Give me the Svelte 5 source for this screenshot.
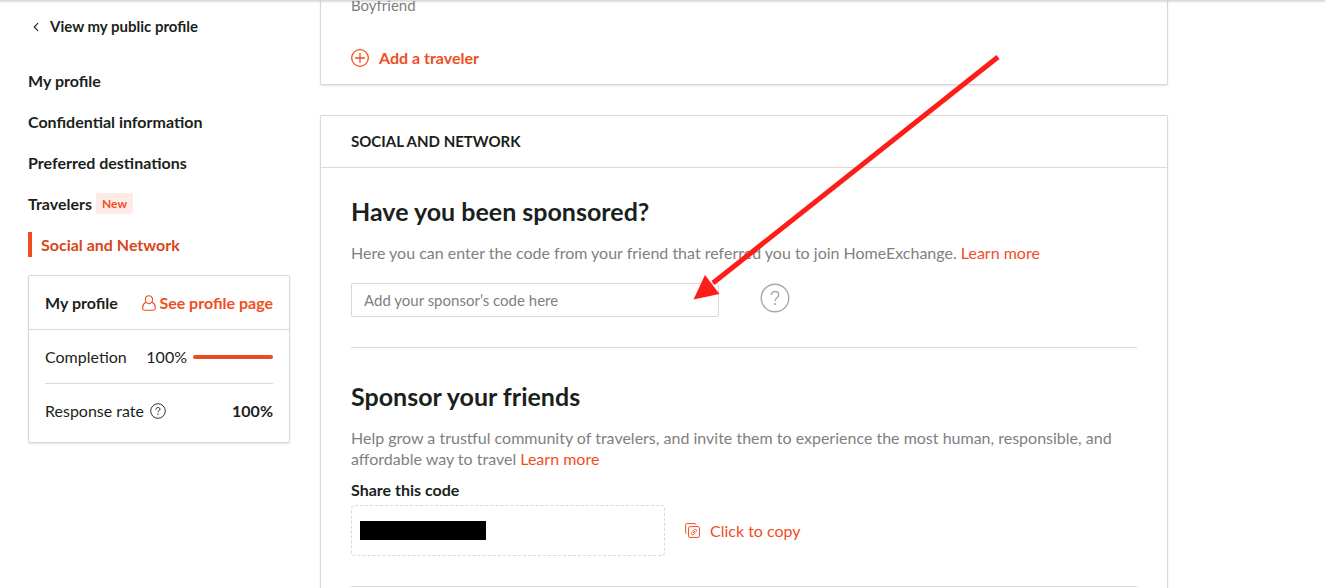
<script lang="ts">
  const links = [
    { label: 'My profile' },
    { label: 'Confidential information' },
    { label: 'Preferred destinations' },
    { label: 'Travelers', badge: 'New' },
    { label: 'Social and Network', active: true },
  ];
  const completion = 100;
  const responseRate = 100;
  let sponsorCode = $state('');
</script>

<div class="page">
  <aside class="sidebar">
    <a class="back" href="#public">
      <svg width="6" height="10" viewBox="0 0 6 10" aria-hidden="true">
        <path d="M5 1.2 1.2 5 5 8.8" fill="none" stroke="currentColor" stroke-width="1.1" />
      </svg>
      View my public profile
    </a>

    <nav>
      {#each links as link}
        <a href="#section" class:active={link.active}>
          <span>{link.label}</span>
          {#if link.badge}<span class="badge">{link.badge}</span>{/if}
        </a>
      {/each}
    </nav>

    <section class="card summary">
      <div class="summary-head">
        <strong>My profile</strong>
        <a class="see" href="#profile">
          <svg width="14" height="16" viewBox="0 0 14 16" fill="none" stroke="currentColor" stroke-width="1.1" aria-hidden="true">
            <path d="M7 .8C4.900.8 3.400 2.500 3.400 4.600S4.900 8.600 7 8.600s3.600-1.900 3.600-4S9.100.8 7 .8Z" />
            <path d="M3.900 7.300C1.900 8.400.7 10 .7 12.400v1.200c0 1 .6 1.600 1.600 1.600h9.400c1 0 1.600-.6 1.600-1.600v-1.200c0-2.400-1.200-4-3.200-5.100" />
          </svg>
          <span>See profile page</span>
        </a>
      </div>
      <div class="summary-body">
        <div class="stat">
          <span>Completion</span>
          <span class="meter">
            {completion}%
            <span class="track"><span class="fill" style="width: {completion}%"></span></span>
          </span>
        </div>
        <div class="stat">
          <span class="rate">
            Response rate
            <svg width="16" height="16" viewBox="0 0 16 16" fill="none" stroke="currentColor" aria-hidden="true">
              <circle cx="8" cy="8" r="7.300" stroke-width=".9" />
              <path d="M6 6.500C6 5.300 6.800 4.500 8 4.500s2 .8 2 1.800C10 7.600 8 7.700 8 9.300" stroke-width="1" />
              <circle cx="8" cy="11.200" r=".7" fill="currentColor" stroke="none" />
            </svg>
          </span>
          <strong>{responseRate}%</strong>
        </div>
      </div>
    </section>
  </aside>

  <main>
    <section class="card travelers">
      <p class="relation">Boyfriend</p>
      <button class="add" type="button">
        <svg width="18" height="18" viewBox="0 0 18 18" fill="none" stroke="currentColor" stroke-width="1.300" aria-hidden="true">
          <circle cx="9" cy="9" r="8.300" />
          <path d="M9 4v10M4 9h10" />
        </svg>
        Add a traveler
      </button>
    </section>

    <section class="card social">
      <h2>SOCIAL AND NETWORK</h2>
      <div class="social-body">
        <div class="block">
          <h3>Have you been sponsored?</h3>
          <p>
            Here you can enter the code from your friend that referred you to join HomeExchange.
            <a href="#sponsored">Learn more</a>
          </p>
          <div class="entry">
            <input type="text" placeholder="Add your sponsor’s code here" aria-label="Add your sponsor’s code here" bind:value={sponsorCode} />
            <button class="help" type="button" aria-label="Help">
              <svg width="30" height="30" viewBox="0 0 30 30" fill="none" stroke="currentColor" aria-hidden="true">
                <circle cx="15" cy="15" r="13.800" stroke-width="1.400" />
                <path d="M11.300 12.300c0-2.300 1.400-3.800 3.700-3.800s3.700 1.500 3.700 3.500c0 2.800-3.700 2.900-3.700 6.200" stroke-width="1.400" />
                <circle cx="15" cy="21" r="1.100" fill="currentColor" stroke="none" />
              </svg>
            </button>
          </div>
        </div>

        <div class="block">
          <h3>Sponsor your friends</h3>
          <p>
            Help grow a trustful community of travelers, and invite them to experience the most human, responsible, and
            affordable way to travel <a href="#sponsor">Learn more</a>
          </p>
          <h4>Share this code</h4>
          <div class="share">
            <div class="code"><span class="redacted"></span></div>
            <button class="copy" type="button">
              <svg width="15" height="15" viewBox="0 0 15 15" fill="none" stroke="currentColor" aria-hidden="true">
                <path d="M2 10.500H1.600c-.6 0-1-.4-1-1V1.600c0-.6.4-1 1-1h8.300c.6 0 1 .4 1 1V2" />
                <rect x="3.600" y="3.600" width="10.800" height="10.800" rx="1.200" />
                <path d="m7.800 8 1.500-1.500c1.300-1 2.900.6 1.900 1.900L9.900 9.700M10.200 10l-1.500 1.500c-1.300 1-2.900-.6-1.900-1.900l1.300-1.300M8 10l2-2" stroke-width=".9" />
              </svg>
              Click to copy
            </button>
          </div>
        </div>
      </div>
    </section>
  </main>

  <svg class="arrow" width="308" height="248" viewBox="0 0 308 248" aria-hidden="true">
    <path d="M305 3 20 229" stroke="#ff1d19" stroke-width="5" />
    <path d="M.5 245.500 12 221 26.500 240Z" fill="#ff1d19" />
  </svg>
</div>

<style>
  :global(body) {
    margin: 0;
    background: #fff;
  }
  .page {
    position: relative;
    display: flex;
    align-items: flex-start;
    gap: 30px;
    box-sizing: border-box;
    max-width: 1196px;
    height: 100vh;
    padding: 0 28px;
    overflow: hidden;
    color: #1b1f20;
    font: 16px/21px Lato, sans-serif;
  }
  .page::before {
    content: '';
    position: fixed;
    inset: 0 0 auto;
    height: 1px;
    background: #d9d9d9;
    box-shadow: 0 1px 2px #0003;
  }
  h2, h3, h4, p {
    margin: 0;
  }
  a {
    color: #f04e1f;
    text-decoration: none;
  }
  button {
    display: flex;
    align-items: center;
    padding: 0;
    border: 0;
    background: none;
    color: #f04e1f;
    font: inherit;
    cursor: pointer;
  }
  svg {
    flex: none;
  }
  .card {
    border: 1px solid #d9d9d9;
    border-radius: 2px;
    box-shadow: 0 1px 2px #0000001f;
    background: #fff;
  }

  .sidebar {
    flex: 0 0 262px;
    padding-top: 16px;
  }
  .back {
    display: flex;
    align-items: center;
    gap: 11px;
    padding-left: 5px;
    color: inherit;
    font-size: 15px;
    font-weight: 700;
  }
  nav {
    display: flex;
    flex-direction: column;
    gap: 16px;
    margin: 31px 0 18px;
  }
  nav a {
    display: flex;
    align-items: center;
    gap: 4px;
    height: 25px;
    color: inherit;
    font-weight: 700;
  }
  nav a.active {
    padding-left: 9px;
    border-left: 4px solid #f04e1f;
    color: #d9451b;
  }
  .badge {
    padding: 0 6px;
    border-radius: 2px;
    background: #fdebe5;
    color: #f04e1f;
    font-size: 12px;
  }

  .summary-head {
    display: flex;
    align-items: center;
    justify-content: space-between;
    height: 53px;
    padding: 0 16px;
    border-bottom: 1px solid #d9d9d9;
  }
  .see {
    display: flex;
    align-items: center;
    gap: 3px;
    font-weight: 700;
  }
  .summary-body {
    padding: 0 16px 5px;
  }
  .stat {
    display: flex;
    align-items: center;
    justify-content: space-between;
    height: 53px;
  }
  .stat + .stat {
    border-top: 1px solid #d9d9d9;
  }
  .meter,
  .rate {
    display: flex;
    align-items: center;
    gap: 6px;
  }
  .track {
    width: 80px;
    height: 4px;
    border-radius: 2px;
    background: #eee;
  }
  .fill {
    display: block;
    height: 4px;
    border-radius: 2px;
    background: #ea4b20;
  }

  main {
    flex: 1;
    min-width: 0;
  }
  .travelers {
    padding: 0 30px 16px;
    border-top: 0;
  }
  .relation {
    color: #7f7f7f;
    font-size: 15px;
    line-height: 11px;
  }
  .add {
    gap: 10px;
    margin-top: 36px;
    font-weight: 700;
  }
  .social {
    margin-top: 30px;
  }
  h2 {
    padding: 15px 30px;
    border-bottom: 1px solid #d9d9d9;
    font-size: 15px;
    line-height: 21px;
  }
  .social-body {
    padding: 0 30px 30px;
  }
  .block {
    padding: 28px 0 30px;
    border-bottom: 1px solid #d9d9d9;
  }
  .block + .block {
    padding-top: 33px;
  }
  h3 {
    margin-bottom: 16px;
    font-size: 25px;
    line-height: 30px;
  }
  .block p {
    color: #7f7f7f;
  }
  .entry {
    display: flex;
    align-items: flex-start;
    gap: 41px;
    margin-top: 20px;
  }
  input {
    box-sizing: border-box;
    width: 368px;
    height: 34px;
    padding: 0 12px;
    border: 1px solid #d9d9d9;
    border-radius: 2px;
    color: inherit;
    font: 15px/21px Lato, sans-serif;
  }
  input::placeholder {
    color: #7f7f7f;
  }
  .help {
    color: #a9a9a9;
  }
  h4 {
    margin: 10px 0 5px;
    font-size: 16px;
    line-height: 21px;
  }
  .share {
    display: flex;
    align-items: center;
    gap: 20px;
  }
  .code {
    box-sizing: border-box;
    display: flex;
    align-items: center;
    width: 314px;
    height: 51px;
    padding: 0 8px;
    border: 1px dashed #d9d9d9;
    border-radius: 4px;
  }
  .redacted {
    width: 126px;
    height: 19px;
    background: #000;
  }
  .copy {
    gap: 10px;
  }
  .arrow {
    position: absolute;
    top: 54px;
    left: 693px;
    pointer-events: none;
  }
</style>
